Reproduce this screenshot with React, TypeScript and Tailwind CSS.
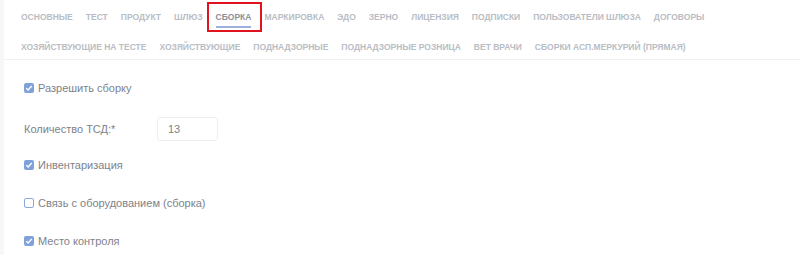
const tabsRow1 = [
  "Основные",
  "Тест",
  "Продукт",
  "Шлюз",
  "Сборка",
  "Маркировка",
  "ЭДО",
  "Зерно",
  "Лицензия",
  "Подписки",
  "Пользователи шлюза",
  "Договоры",
];

const tabsRow2 = [
  "Хозяйствующие на тесте",
  "Хозяйствующие",
  "Поднадзорные",
  "Поднадзорные розница",
  "Вет врачи",
  "Сборки АСП.Меркурий (прямая)",
];

function Tab({ label, active }: { label: string; active?: boolean }) {
  if (active) {
    return (
      <div className="relative">
        <span className="relative block text-[#8a9099] border-b-2 border-[#9bb0dc] pb-[3px] pt-[3px]">{label}</span>
        <div className="absolute -left-[9px] -right-[11px] -top-[7px] -bottom-[4px] border-2 border-[#e0141e]" />
      </div>
    );
  }
  return <span className="block pt-[3px] pb-[5px]">{label}</span>;
}

function Check({ checked, label }: { checked: boolean; label: string }) {
  return (
    <label className="flex items-center gap-[4px] h-[14px]">
      {checked ? (
        <span className="w-[10px] h-[10px] rounded-[2px] bg-[#7fa2da] flex items-center justify-center">
          <svg width="8" height="8" viewBox="0 0 8 8">
            <path d="M1.3 4.2 L3.1 6 L6.7 2" stroke="white" strokeWidth="1.4" fill="none" />
          </svg>
        </span>
      ) : (
        <span className="w-[10px] h-[10px] rounded-[2px] border border-[#8aa9dc] bg-white" />
      )}
      <span>{label}</span>
    </label>
  );
}

export default function App() {
  return (
    <div className="w-[800px] h-[255px] bg-white flex font-['Liberation_Sans',Arial,sans-serif] overflow-hidden">
      <div className="w-[4px] bg-[#f6f7f9]" />
      <div className="flex-1 flex flex-col">
        <div className="h-[60px] border-b border-[#f0f1f3] pl-[17px] pt-[9px] text-[8.5px] font-bold uppercase text-[#b9bdc4] leading-[11px]">
          <div className="flex gap-x-[13px]">
            {tabsRow1.map((t) => (
              <Tab key={t} label={t} active={t === "Сборка"} />
            ))}
          </div>
          <div className="flex gap-x-[13px] mt-[11px]">
            {tabsRow2.map((t) => (
              <Tab key={t} label={t} />
            ))}
          </div>
        </div>
        <div className="pl-[20px] text-[11px] text-[#7d828a] flex flex-col">
          <div className="mt-[21px]">
            <Check checked label="Разрешить сборку" />
          </div>
          <div className="flex items-center mt-[22px]">
            <span className="w-[133px]">Количество ТСД:*</span>
            <div className="w-[61px] h-[24px] border border-[#eceef1] rounded-[3px] pl-[10px] flex items-center text-[#7d828a]">
              13
            </div>
          </div>
          <div className="mt-[17px]">
            <Check checked label="Инвентаризация" />
          </div>
          <div className="mt-[24px]">
            <Check checked={false} label="Связь с оборудованием (сборка)" />
          </div>
          <div className="mt-[24px]">
            <Check checked label="Место контроля" />
          </div>
        </div>
      </div>
    </div>
  );
}
